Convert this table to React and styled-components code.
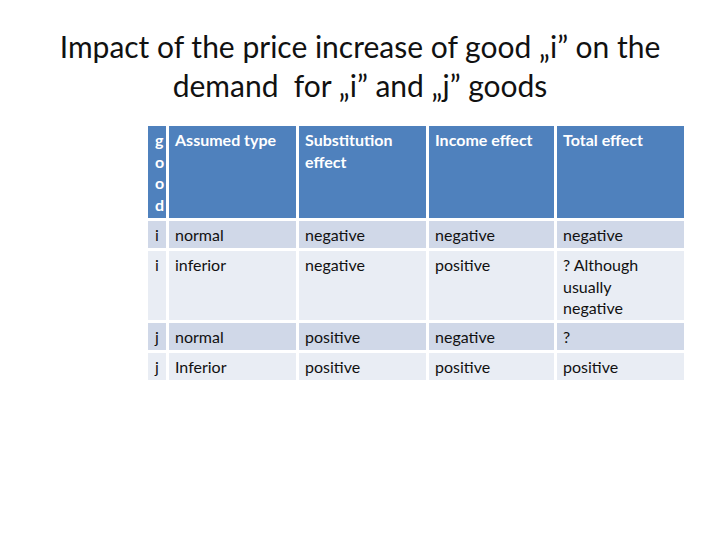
import React from 'react';
import styled, { createGlobalStyle } from 'styled-components';

const GlobalStyle = createGlobalStyle`
  html, body {
    margin: 0;
    padding: 0;
    background: #ffffff;
  }
  body {
    width: 720px;
    height: 540px;
    overflow: hidden;
    font-family: 'Lato', 'Open Sans', sans-serif;
  }
`;

const Slide = styled.div`
  width: 720px;
  height: 540px;
  display: flex;
  flex-direction: column;
  padding-top: 27px;
  box-sizing: border-box;
`;

const Title = styled.h1`
  margin: 0;
  font-family: 'Lato', 'Open Sans', sans-serif;
  font-weight: 400;
  font-size: 30px;
  line-height: 39px;
  color: #111;
  text-align: center;
  white-space: pre-wrap;
`;

const TableWrap = styled.div`
  margin-top: 21px;
  margin-left: 148px;
  align-self: flex-start;
  display: grid;
  grid-template-columns: 18px 127px 127px 125px 127px;
  grid-template-rows: 92px 27px 69px 27px 27px;
  gap: 3px;
`;

const Cell = styled.div`
  background: ${p => (p.$head ? '#4f81bd' : p.$odd ? '#d0d8e8' : '#e9edf4')};
  color: ${p => (p.$head ? '#ffffff' : '#111111')};
  font-weight: ${p => (p.$head ? 700 : 400)};
  font-size: 16px;
  line-height: 21.5px;
  padding: 3px ${p => (p.$narrow ? '0' : '12px')} 0 ${p => (p.$narrow ? '7px' : '6px')};
  box-sizing: border-box;
  overflow: hidden;
  word-break: ${p => (p.$narrow ? 'break-all' : 'normal')};
`;

const header = ['good', 'Assumed type', 'Substitution effect', 'Income effect', 'Total effect'];

const rows = [
  ['i', 'normal', 'negative', 'negative', 'negative'],
  ['i', 'inferior', 'negative', 'positive', '? Although usually negative'],
  ['j', 'normal', 'positive', 'negative', '?'],
  ['j', 'Inferior', 'positive', 'positive', 'positive'],
];

export default function App() {
  return (
    <>
      <GlobalStyle />
      <Slide>
        <Title>{'Impact of the price increase of good „i” on the\ndemand  for „i” and „j” goods'}</Title>
        <TableWrap>
          {header.map((h, i) => (
            <Cell key={h} $head $narrow={i === 0}>{h}</Cell>
          ))}
          {rows.map((r, ri) =>
            r.map((c, ci) => (
              <Cell key={ri + '-' + ci} $odd={ri % 2 === 0} $narrow={ci === 0}>{c}</Cell>
            ))
          )}
        </TableWrap>
      </Slide>
    </>
  );
}
